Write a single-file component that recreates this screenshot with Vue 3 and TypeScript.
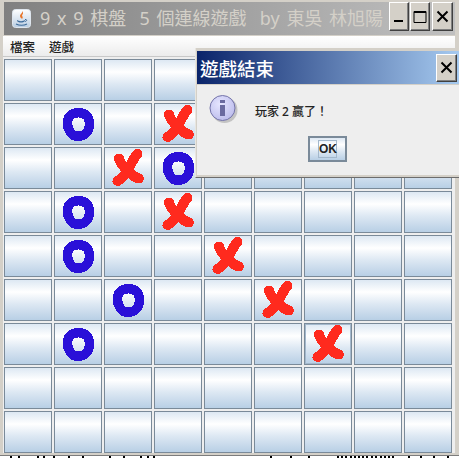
<script setup lang="ts">
type Mark = '' | 'O' | 'X'

const size = 9
// bound as data, the compiler would squeeze the double spaces in the template
const appTitle = '9 x 9 棋盤  5 個連線遊戲  by 東吳 林旭陽'
const marks: Record<string, Mark> = {
  '1-1': 'O', '1-3': 'X',
  '2-2': 'X', '2-3': 'O',
  '3-1': 'O', '3-3': 'X',
  '4-1': 'O', '4-4': 'X',
  '5-2': 'O', '5-5': 'X',
  '6-1': 'O', '6-6': 'X',
}

const cells: { id: string; mark: Mark; focused: boolean }[] = []
for (let r = 0; r < size; r++) {
  for (let c = 0; c < size; c++) {
    const id = `${r}-${c}`
    cells.push({ id, mark: marks[id] ?? '', focused: id === '6-6' })
  }
}

// bits of the desktop text peeking out under the window
const ticks = [10, 18, 37, 43, 53, 68, 82, 109, 123, 140, 147, 153, 270, 290, 308,
  337, 341, 345, 350, 354, 358, 362, 366, 371, 375, 380, 384, 388, 392, 408, 420, 433, 447]
</script>

<template>
  <div class="desktop">
    <div class="frame">
      <div class="titlebar">
        <svg class="java" width="19" height="19" viewBox="0 0 19 19">
          <defs>
            <linearGradient id="jbg" x1="0" y1="0" x2="0" y2="1">
              <stop offset="0" stop-color="#ffffff" />
              <stop offset="1" stop-color="#b9cde2" />
            </linearGradient>
          </defs>
          <rect x="0.5" y="0.5" width="18" height="18" rx="3" fill="url(#jbg)" stroke="#dfe6ee" />
          <path d="M10 2 C11 4 8 5 8 7 C8 9 10 9 10 10 C12 8 9 7 10.5 5.5 C11.5 4.5 11 3 10 2 Z" fill="#e8762b" />
          <path d="M5 11 C7 12.5 11 12.5 13 11 L13 12 C11 14 7 14 5 12 Z" fill="#3f6d9c" />
          <path d="M13 10.5 C15 10 15.5 12 13 12.5" fill="none" stroke="#3f6d9c" />
          <path d="M4 15 C7 16.5 12 16.5 15 15" fill="none" stroke="#3f6d9c" stroke-width="1.2" />
        </svg>
        <span class="app-title">{{ appTitle }}</span>
        <div class="win-buttons">
          <button class="win-btn">
            <svg width="12" height="12" viewBox="0 0 12 12"><rect x="1" y="9" width="9" height="2" fill="#000" /></svg>
          </button>
          <button class="win-btn">
            <svg width="14" height="14" viewBox="0 0 14 14"><path d="M1 1.5h12v11H1z M1 2.5h12" fill="none" stroke="#000" /></svg>
          </button>
          <button class="win-btn win-btn-close">
            <svg width="13" height="13" viewBox="0 0 13 13"><path d="M1.5 1.5 L11.5 11.5 M11.5 1.5 L1.5 11.5" stroke="#000" stroke-width="2" /></svg>
          </button>
        </div>
      </div>

      <div class="menubar">
        <span class="menu-item">檔案</span>
        <span class="menu-item">遊戲</span>
      </div>

      <div class="content">
        <div class="board">
          <div v-for="cell in cells" :key="cell.id" class="cell" :class="{ focused: cell.focused }">
            <svg v-if="cell.mark === 'O'" class="mark" width="48" height="42" viewBox="0 0 48 42">
              <path d="M13.500 19.500 C13.500 13 18 9.700 24.500 9.700 C31 9.700 35.500 14 35.500 20.500 C35.500 28 31 33.300 24 33.300 C17.500 33.300 13.500 27 13.500 19.500 Z"
                fill="none" stroke="#2a10d8" stroke-width="9.500" />
            </svg>
            <svg v-else-if="cell.mark === 'X'" class="mark" width="48" height="42" viewBox="0 0 48 42">
              <path d="M13.500 34 C19 31 22 27 25 21 C28 15 30 10.500 33.500 7" fill="none" stroke="#ff2a1e" stroke-width="10" stroke-linecap="round" />
              <path d="M15 11.500 C17 17 20 21 25 25 C28 28 31 30.500 35 31.500" fill="none" stroke="#ff2a1e" stroke-width="10" stroke-linecap="round" />
            </svg>
          </div>
        </div>
      </div>
    </div>

    <svg class="strip" width="459" height="2" viewBox="0 0 459 2">
      <rect v-for="x in ticks" :key="x" :x="x" y="0" width="2" height="2" fill="#000" />
    </svg>

    <div class="dialog">
      <div class="dialog-title">
        <span class="dialog-caption">遊戲結束</span>
        <button class="win-btn dialog-close">
          <svg width="13" height="13" viewBox="0 0 13 13"><path d="M1.5 1.5 L11.5 11.5 M11.5 1.5 L1.5 11.5" stroke="#000" stroke-width="2" /></svg>
        </button>
      </div>
      <div class="dialog-body">
        <div class="message">
          <svg class="info" width="32" height="32" viewBox="0 0 32 32">
            <defs>
              <radialGradient id="ibg" cx="0.4" cy="0.35" r="0.7">
                <stop offset="0" stop-color="#e6e6ff" />
                <stop offset="1" stop-color="#bcbcec" />
              </radialGradient>
            </defs>
            <circle cx="15.500" cy="15" r="13" fill="#8d8d8d" opacity="0.45" />
            <circle cx="13.500" cy="13" r="12.500" fill="url(#ibg)" stroke="#7373a8" />
            <rect x="11" y="5" width="5" height="3" fill="#6a6aa0" />
            <rect x="11" y="10" width="5" height="11" fill="#6a6aa0" />
          </svg>
          <span class="message-text">玩家 2 贏了！</span>
        </div>
        <button class="ok-btn"><span class="ok-inner">OK</span></button>
      </div>
    </div>
  </div>
</template>

<style>
html,
body {
  background: #ffffff;
}
</style>

<style scoped>
.desktop {
  position: relative;
  width: 459px;
  height: 458px;
  overflow: hidden;
  background: #ffffff;
  font-family: "Noto Sans", "Noto Sans CJK TC", sans-serif;
}

.frame {
  display: flex;
  flex-direction: column;
  box-sizing: border-box;
  height: 456px;
  padding: 2px 3px 2px 3px;
  background: #d4d0c8;
  border-bottom: 1px solid #7c7c7c;
}

.titlebar {
  display: flex;
  align-items: center;
  height: 33px;
  margin: 0 1px 1px 1px;
  padding: 0 2px 0 8px;
  background: linear-gradient(to right, #808080, #c0c0c0);
}

.java {
  flex: none;
  margin-right: 9px;
}

.app-title {
  flex: 1;
  color: #d4d0c8;
  font-size: 18px;
  line-height: 33px;
  word-spacing: 2px;
  white-space: pre;
  overflow: hidden;
}

.win-buttons {
  display: flex;
  gap: 1px;
  margin-top: -4px;
}

.win-btn {
  display: flex;
  align-items: center;
  justify-content: center;
  box-sizing: border-box;
  width: 20px;
  height: 29px;
  padding: 0;
  background: #d4d0c8;
  border: 1px solid;
  border-color: #ffffff #404040 #404040 #ffffff;
  box-shadow: inset -1px -1px 0 #808080;
}

.win-btn-close {
  width: 21px;
  margin-left: 1px;
}

.menubar {
  display: flex;
  align-items: center;
  gap: 14px;
  flex: none;
  height: 21px;
  margin: 0 1px 0 0;
  padding-left: 7px;
  background: linear-gradient(to bottom, #ffffff, #ececec);
  border-bottom: 1px solid #c8c8c8;
  box-sizing: border-box;
}

.menu-item {
  color: #222222;
  font-size: 12.500px;
  font-weight: 500;
}

.content {
  flex: 1;
  margin-right: 1px;
  padding: 2px 3px 0 1px;
  background: #eeeeee;
}

.board {
  display: grid;
  grid-template-columns: repeat(9, 48px);
  grid-auto-rows: 42px;
  gap: 2px;
}

.cell {
  position: relative;
  box-sizing: border-box;
  border: 1px solid #7a8a99;
  background: linear-gradient(to bottom, #dde8f3 0%, #ffffff 30%, #dde8f3 60%, #b8cfe5 100%);
}

.cell.focused {
  box-shadow: inset 0 0 0 1px #a3b8cc;
}

.mark {
  display: block;
  margin: -1px;
  shape-rendering: crispEdges;
}

.strip {
  display: block;
  background: #ffffff;
}

/* the dialog floats over the board */
.dialog {
  position: absolute;
  top: 48px;
  left: 195px;
  display: flex;
  flex-direction: column;
  box-sizing: border-box;
  width: 264px;
  height: 130px;
  padding: 3px 0 2px 1px;
  background: #d4d0c8;
  border-left: 1px solid #e8e6e0;
  border-bottom: 1px solid #6c6c6c;
}

.dialog-title {
  display: flex;
  align-items: center;
  justify-content: space-between;
  flex: none;
  height: 33px;
  padding: 0 2px 0 3px;
  background: linear-gradient(to right, #0a246a, #a6caf0);
}

.dialog-caption {
  color: #ffffff;
  font-size: 18.500px;
  font-weight: 500;
}

.dialog-close {
  width: 21px;
  height: 28px;
}

.dialog-body {
  display: flex;
  flex-direction: column;
  flex: 1;
  padding: 0;
  margin-top: 1px;
  background: #eeeeee;
}

.message {
  display: flex;
  align-items: center;
  height: 51px;
  padding: 1px 0 0 12px;
  box-sizing: border-box;
}

.info {
  flex: none;
}

.message-text {
  margin-left: 14px;
  color: #222222;
  font-size: 12px;
  font-weight: 500;
  white-space: pre;
}

.ok-btn {
  display: flex;
  align-items: center;
  justify-content: center;
  box-sizing: border-box;
  width: 39px;
  height: 26px;
  margin-left: 111px;
  padding: 0;
  border: 2px solid #7a8a99;
  background: linear-gradient(to bottom, #dde8f3 0%, #ffffff 30%, #dde8f3 60%, #b8cfe5 100%);
}

.ok-inner {
  box-sizing: border-box;
  width: 19px;
  height: 18px;
  border: 1px solid #a3b8cc;
  color: #222222;
  font-family: "Liberation Sans", sans-serif;
  font-size: 12px;
  font-weight: 700;
  line-height: 16px;
  text-align: center;
}
</style>
